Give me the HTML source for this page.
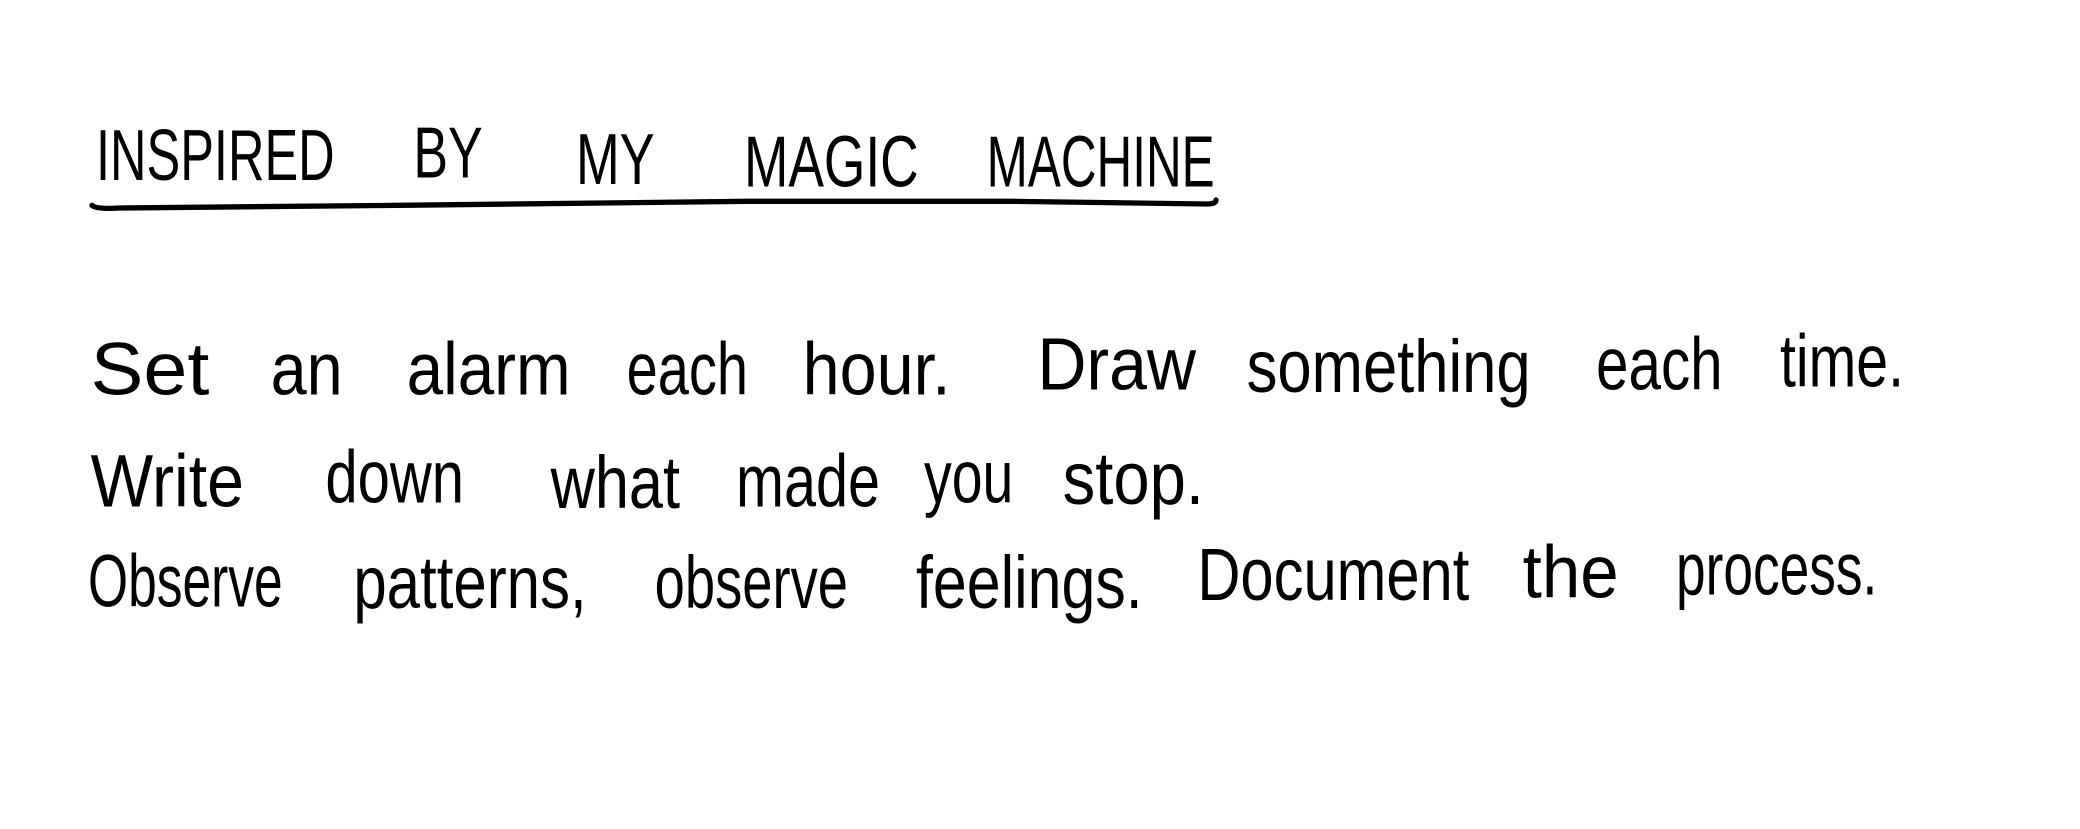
<!DOCTYPE html>
<html><head><meta charset="utf-8"><style>
html,body{margin:0;padding:0;background:#fff;width:2080px;height:829px;overflow:hidden}
svg{display:block}
text{font-family:"Liberation Sans",sans-serif;fill:#000}
.h{font-size:54px}
.b{font-size:56px}
</style></head><body>
<svg width="2080" height="829" viewBox="0 0 1560 621.75" xmlns="http://www.w3.org/2000/svg">
<g class="h" lengthAdjust="spacingAndGlyphs">
<text class="h" x="72" y="135" textLength="179" lengthAdjust="spacingAndGlyphs">INSPIRED</text>
<text class="h" x="310" y="133" textLength="52" lengthAdjust="spacingAndGlyphs">BY</text>
<text class="h" x="432" y="138" textLength="59" lengthAdjust="spacingAndGlyphs">MY</text>
<text class="h" x="558" y="140" textLength="131" lengthAdjust="spacingAndGlyphs">MAGIC</text>
<text class="h" x="740" y="140" textLength="171" lengthAdjust="spacingAndGlyphs">MACHINE</text>
</g>
<path d="M69 154 Q72 157 90 156 L300 154 L560 151 L760 151 L905 153 Q912 153 912 150" fill="none" stroke="#000" stroke-width="4" stroke-linecap="round"/>
<g>
<text class="b" x="68" y="296" textLength="89" lengthAdjust="spacingAndGlyphs">Set</text>
<text class="b" x="203" y="296" textLength="54" lengthAdjust="spacingAndGlyphs">an</text>
<text class="b" x="305" y="296" textLength="123" lengthAdjust="spacingAndGlyphs">alarm</text>
<text class="b" x="470" y="296" textLength="91" lengthAdjust="spacingAndGlyphs">each</text>
<text class="b" x="602" y="296" textLength="111" lengthAdjust="spacingAndGlyphs">hour.</text>
<text class="b" x="778" y="292" textLength="119" lengthAdjust="spacingAndGlyphs">Draw</text>
<text class="b" x="935" y="294" textLength="213" lengthAdjust="spacingAndGlyphs">something</text>
<text class="b" x="1197" y="292" textLength="95" lengthAdjust="spacingAndGlyphs">each</text>
<text class="b" x="1335" y="290" textLength="93" lengthAdjust="spacingAndGlyphs">time.</text>

<text class="b" x="68" y="380" textLength="115" lengthAdjust="spacingAndGlyphs">Write</text>
<text class="b" x="244" y="377" textLength="104" lengthAdjust="spacingAndGlyphs">down</text>
<text class="b" x="413" y="381" textLength="97" lengthAdjust="spacingAndGlyphs">what</text>
<text class="b" x="552" y="380" textLength="108" lengthAdjust="spacingAndGlyphs">made</text>
<text class="b" x="693" y="377" textLength="67" lengthAdjust="spacingAndGlyphs">you</text>
<text class="b" x="797" y="378" textLength="106" lengthAdjust="spacingAndGlyphs">stop.</text>

<text class="b" x="66" y="455" textLength="146" lengthAdjust="spacingAndGlyphs">Observe</text>
<text class="b" x="265" y="456" textLength="175" lengthAdjust="spacingAndGlyphs">patterns,</text>
<text class="b" x="491" y="456" textLength="145" lengthAdjust="spacingAndGlyphs">observe</text>
<text class="b" x="687" y="456" textLength="170" lengthAdjust="spacingAndGlyphs">feelings.</text>
<text class="b" x="898" y="450" textLength="204" lengthAdjust="spacingAndGlyphs">Document</text>
<text class="b" x="1142" y="448" textLength="72" lengthAdjust="spacingAndGlyphs">the</text>
<text class="b" x="1257" y="446" textLength="151" lengthAdjust="spacingAndGlyphs">process.</text>
</g>
</svg>
</body></html>
